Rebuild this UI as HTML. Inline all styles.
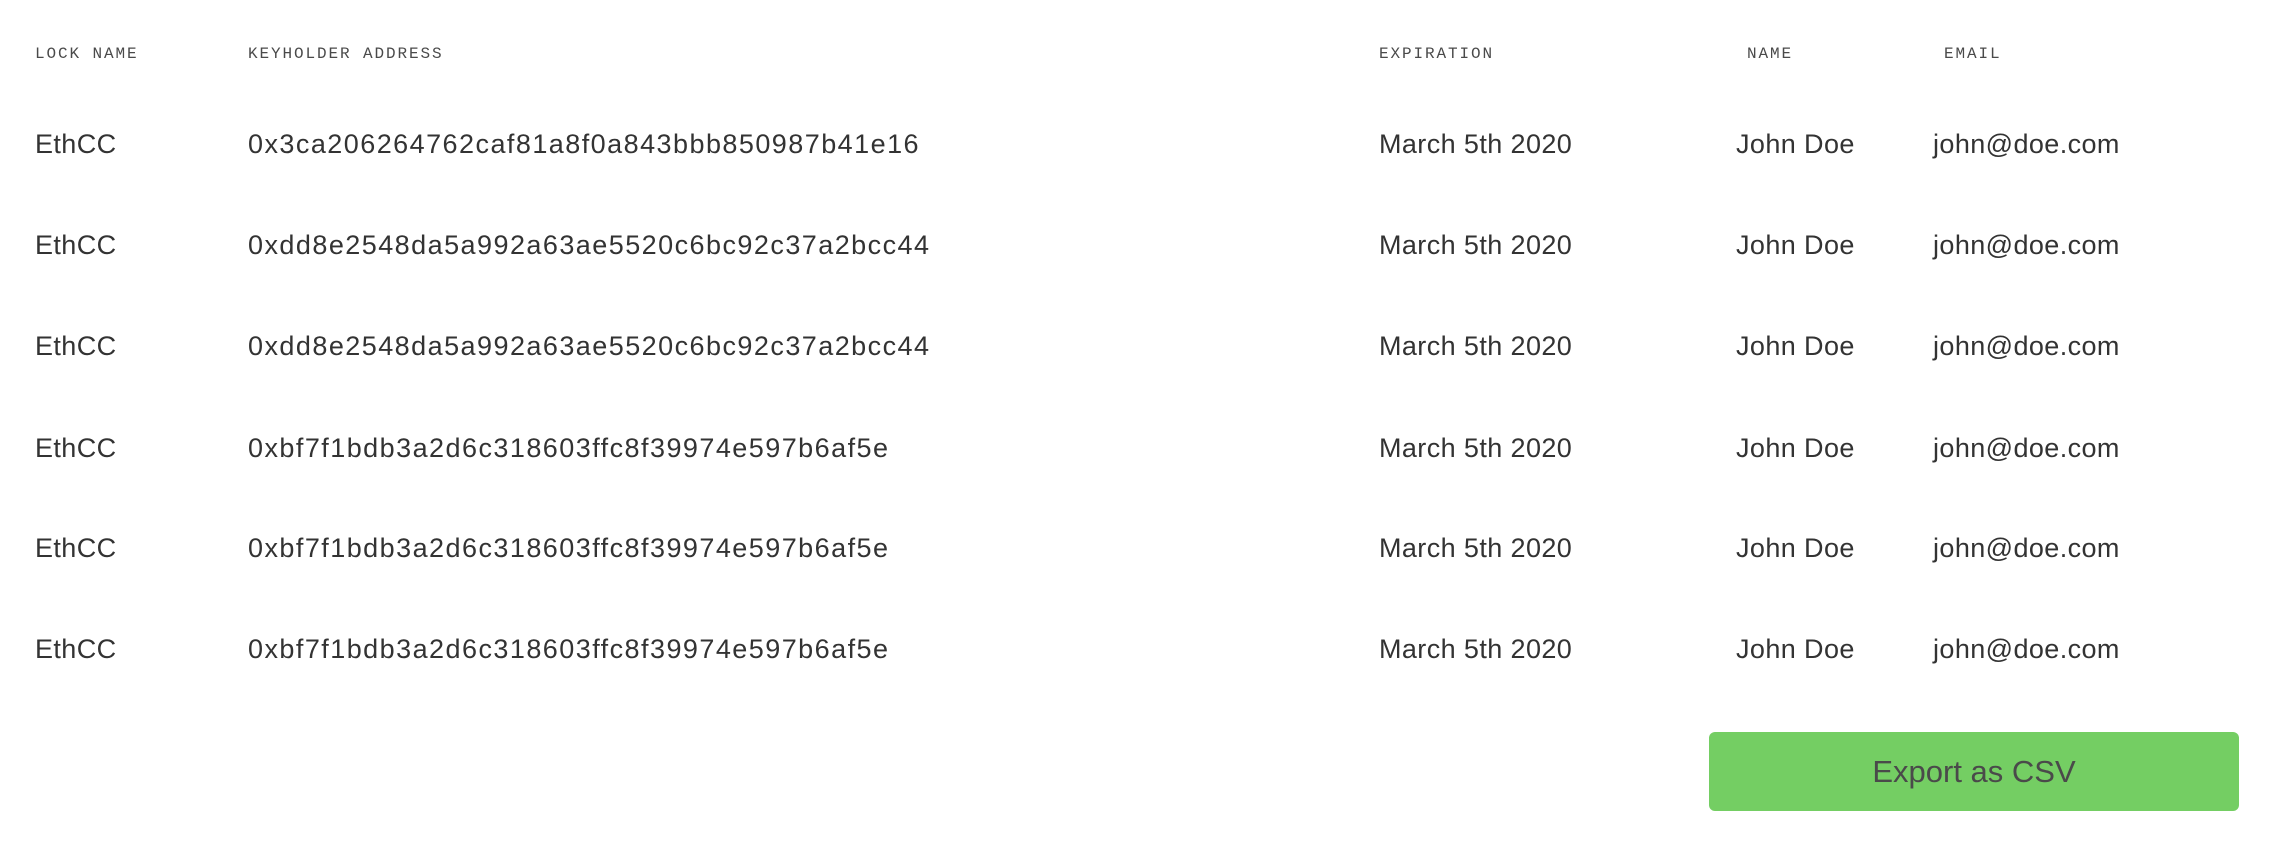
<!DOCTYPE html>
<html><head><meta charset="utf-8"><style>
html,body{margin:0;padding:0;background:#fff;width:2272px;height:866px;overflow:hidden}
body{position:relative;font-family:"Liberation Sans",sans-serif;color:#333}
.h{position:absolute;top:45px;font-family:"Liberation Mono",monospace;font-size:16px;letter-spacing:1.9px;color:#4a4a4a;line-height:18px}
.c{position:absolute;font-size:27px;line-height:32px;color:#333;white-space:nowrap;letter-spacing:0.4px}
.a{letter-spacing:1.45px}
.btn{position:absolute;left:1709px;top:732px;width:530px;height:79px;background:#74ce63;border-radius:6px;color:#4a4a4a;font-size:31px;text-align:center;line-height:79px}
</style></head><body>
<div class="h" style="left:35px">LOCK NAME</div>
<div class="h" style="left:248px">KEYHOLDER ADDRESS</div>
<div class="h" style="left:1379px">EXPIRATION</div>
<div class="h" style="left:1747px">NAME</div>
<div class="h" style="left:1944px">EMAIL</div>

<div class="c" style="left:35px;top:128px">EthCC</div><div class="c a" style="left:248px;top:128px">0x3ca206264762caf81a8f0a843bbb850987b41e16</div><div class="c" style="left:1379px;top:128px">March 5th 2020</div><div class="c" style="left:1736px;top:128px">John Doe</div><div class="c" style="left:1933px;top:128px">john@doe.com</div>
<div class="c" style="left:35px;top:229px">EthCC</div><div class="c a" style="left:248px;top:229px">0xdd8e2548da5a992a63ae5520c6bc92c37a2bcc44</div><div class="c" style="left:1379px;top:229px">March 5th 2020</div><div class="c" style="left:1736px;top:229px">John Doe</div><div class="c" style="left:1933px;top:229px">john@doe.com</div>
<div class="c" style="left:35px;top:330px">EthCC</div><div class="c a" style="left:248px;top:330px">0xdd8e2548da5a992a63ae5520c6bc92c37a2bcc44</div><div class="c" style="left:1379px;top:330px">March 5th 2020</div><div class="c" style="left:1736px;top:330px">John Doe</div><div class="c" style="left:1933px;top:330px">john@doe.com</div>
<div class="c" style="left:35px;top:432px">EthCC</div><div class="c a" style="left:248px;top:432px">0xbf7f1bdb3a2d6c318603ffc8f39974e597b6af5e</div><div class="c" style="left:1379px;top:432px">March 5th 2020</div><div class="c" style="left:1736px;top:432px">John Doe</div><div class="c" style="left:1933px;top:432px">john@doe.com</div>
<div class="c" style="left:35px;top:532px">EthCC</div><div class="c a" style="left:248px;top:532px">0xbf7f1bdb3a2d6c318603ffc8f39974e597b6af5e</div><div class="c" style="left:1379px;top:532px">March 5th 2020</div><div class="c" style="left:1736px;top:532px">John Doe</div><div class="c" style="left:1933px;top:532px">john@doe.com</div>
<div class="c" style="left:35px;top:633px">EthCC</div><div class="c a" style="left:248px;top:633px">0xbf7f1bdb3a2d6c318603ffc8f39974e597b6af5e</div><div class="c" style="left:1379px;top:633px">March 5th 2020</div><div class="c" style="left:1736px;top:633px">John Doe</div><div class="c" style="left:1933px;top:633px">john@doe.com</div>

<div class="btn">Export as CSV</div>
</body></html>
